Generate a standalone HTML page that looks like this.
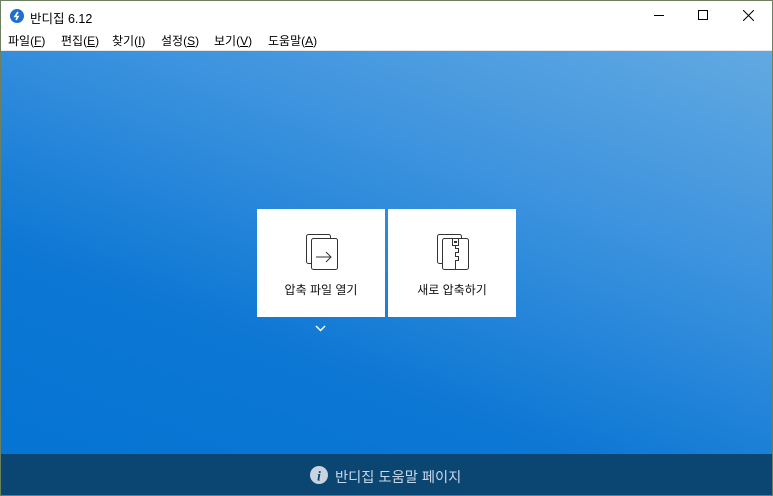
<!DOCTYPE html>
<html><head><meta charset="utf-8"><style>
*{margin:0;padding:0;box-sizing:border-box}
body{width:773px;height:496px;overflow:hidden;font-family:"Liberation Sans","Noto Sans CJK KR","NanumGothic",sans-serif;background:#6b8060;position:relative}
#win{position:absolute;left:1px;top:1px;width:771px;height:494px;background:#fff;overflow:hidden}
.title{position:absolute;left:0;top:0;height:30px;width:100%;font-size:12.5px;color:#000}
.menu{position:absolute;top:30px;left:0;width:100%;height:20px;font-size:12px;border-bottom:1px solid #e6e6e6}
.menu span{position:absolute;top:1px}
.main{position:absolute;top:50px;left:0;width:771px;height:403px;background:linear-gradient(200deg,#62a9e1 0%,#3b92de 35%,#0d77d4 70%,#0574d3 100%)}
.foot{position:absolute;top:453px;left:0;width:771px;height:41px;background:#0b4572;color:#c8d8e8;font-size:14.3px}
.card{position:absolute;top:158px;width:128px;height:108px;background:#fff;font-size:12px;color:#111;text-align:center}
.card .t{position:absolute;top:72px;width:100%}
</style></head><body><div id="win">
<div class="title">
<svg style="position:absolute;left:9px;top:8px" width="14" height="14" viewBox="0 0 14 14"><circle cx="7" cy="7" r="7" fill="#1e6fd0"/><path d="M8 3L5 7.5h3L6 11" stroke="#fff" stroke-width="1.6" fill="none"/></svg>
<span style="position:absolute;left:29px;top:7px">반디집 6.12</span>
<div style="position:absolute;left:653px;top:14px;width:10px;height:1px;background:#000"></div>
<div style="position:absolute;left:697px;top:9px;width:10px;height:10px;border:1px solid #000"></div>
<svg style="position:absolute;left:742px;top:9px" width="11" height="11"><path d="M0 0L11 11M11 0L0 11" stroke="#000" stroke-width="1"/></svg>
</div>
<div class="menu">
<span style="left:7px">파일(<u>F</u>)</span><span style="left:60px">편집(<u>E</u>)</span><span style="left:111px">찾기(<u>I</u>)</span><span style="left:160px">설정(<u>S</u>)</span><span style="left:213px">보기(<u>V</u>)</span><span style="left:267px">도움말(<u>A</u>)</span>
</div>
<div class="main">
<div class="card" style="left:256px">
<svg style="position:absolute;left:48px;top:24px" width="34" height="38"><rect x="1.5" y="1.5" width="24" height="29" rx="2" fill="#fff" stroke="#333"/><rect x="6.5" y="5.5" width="26" height="31" rx="2" fill="#fff" stroke="#333"/><path d="M11 24h15M21 19l5 5-5 5" stroke="#333" fill="none"/></svg>
<div class="t">압축 파일 열기</div></div>
<div class="card" style="left:387px">
<svg style="position:absolute;left:48px;top:24px" width="34" height="38"><rect x="1.5" y="1.5" width="24" height="29" rx="2" fill="#fff" stroke="#333"/><rect x="6.5" y="5.5" width="26" height="31" rx="2" fill="#fff" stroke="#333"/><path d="M16.5 6v6.5h6V6" stroke="#333" fill="none"/><rect x="18" y="8" width="3" height="2" fill="#333"/><path d="M19.5 12.5v3h3v4h-3v4h3v4h-3v9" stroke="#333" fill="none"/></svg>
<div class="t">새로 압축하기</div></div>
<svg style="position:absolute;left:314px;top:274px" width="11" height="7"><path d="M1 1l4.5 4.5L10 1" stroke="#fff" stroke-width="1.5" fill="none"/></svg>
</div>
<div class="foot">
<svg style="position:absolute;left:309px;top:12px" width="18" height="18"><circle cx="9" cy="9" r="9" fill="#c8d4e0"/><text x="9" y="14.5" font-family="Liberation Serif" font-style="italic" font-weight="bold" font-size="14" fill="#0b4572" text-anchor="middle">i</text></svg>
<span style="position:absolute;left:334px;top:12px">반디집 도움말 페이지</span>
</div>
</div></body></html>
